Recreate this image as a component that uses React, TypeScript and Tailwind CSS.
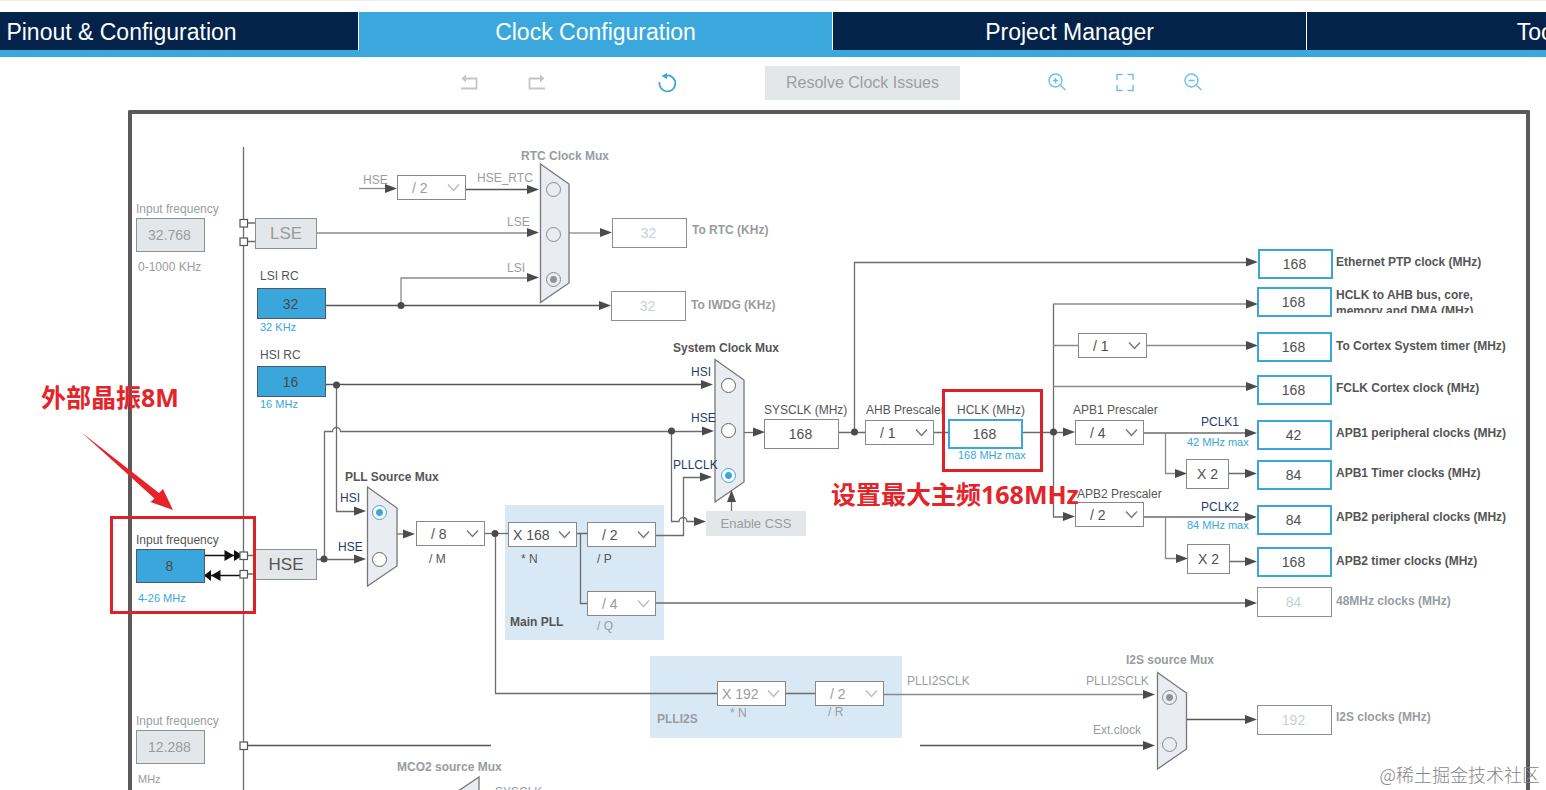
import React from 'react';
import clsx from 'clsx';

// The header takes this much height, diagram coordinates start below it
const CANVAS_TOP = 100;

const at = (x: number, y: number) => ({ left: x, top: y - CANVAS_TOP });

type Dir = 'right' | 'left' | 'up';

const wires: { d: string; tone?: 'light' | 'dark' }[] = [
  { d: 'M243.5 147V800' },
  { d: 'M247 223H255M247 241.5H255M247 555.5H255M247 574H255' },
  { d: 'M317 233H527', tone: 'light' },
  { d: 'M359 188.5H386', tone: 'light' },
  { d: 'M465 189.5H527', tone: 'dark' },
  { d: 'M325 305.5H600', tone: 'dark' },
  { d: 'M401 305V278H527', tone: 'light' },
  { d: 'M569 233H601', tone: 'light' },
  { d: 'M325 384.5H702', tone: 'dark' },
  { d: 'M336.5 385V511.5H355' },
  { d: 'M317 559.5H355' },
  { d: 'M324.5 559V431.5H332.5A4 4 0 0 1 340.5 431.5H702' },
  { d: 'M671.5 431V521.5H679A4 4 0 0 1 687 521.5H695' },
  { d: 'M397 534H405' },
  { d: 'M484 533.5H509' },
  { d: 'M495.5 533V693.5H717M785 693.5H815' },
  { d: 'M883 694.5H1144', tone: 'light' },
  { d: 'M577 533.5H588M580.5 533V603.5H588' },
  { d: 'M655 535.5H683.5V477.5H702' },
  { d: 'M655 603H1247' },
  { d: 'M744 432.5H754' },
  { d: 'M731.5 511V502' },
  { d: 'M839 432.5H865M933 432.5H949M1023 432.5H1064' },
  { d: 'M854.5 432V262.5H1247' },
  { d: 'M1053.5 304V517H1064' },
  { d: 'M1053 304H1247M1053 345.5H1078M1147 345.5H1247M1053 386.5H1247', tone: 'light' },
  { d: 'M1143 433H1247M1143 517H1247' },
  { d: 'M1165.5 433V473.5H1177M1165.5 517V558.5H1177', tone: 'light' },
  { d: 'M1228 473.5H1247M1229 561.5H1247' },
  { d: 'M1186 719.5H1246', tone: 'dark' },
  { d: 'M920 745.5H1144M247 745.5H491', tone: 'dark' },
];

const arrows: [number, number, Dir?][] = [
  [397, 188.5], [539, 189.5], [539, 232.5], [539, 277.5], [612, 232.5], [611, 305.5],
  [713, 384.5], [714, 431], [712, 477], [706, 521.5], [765, 432], [366, 511], [366, 559],
  [415, 534], [1258, 262], [1258, 304], [1258, 345.5], [1258, 386.5], [1257, 433],
  [1257, 473.5], [1257, 517], [1257, 561.5], [1257, 603], [1075, 432], [1075, 516.5],
  [1187, 473.5], [1188, 558.5], [1155, 694.5], [1155, 745.5], [1257, 719.5],
  [731.5, 490, 'up'],
];

const dots = [
  [401, 305.5], [336.5, 385], [324, 559], [671.5, 431], [495, 533.5], [854.5, 432], [1053.5, 432],
];

const pins = [223, 241.5, 555.5, 574, 745.5];

const muxes = [
  '540.5,164 569,184 569,283 540.5,302.5',
  '367.5,487 397,508 397,566 367.5,586',
  '715,359.5 744,380 744,482 715,502',
  '1157.5,672.5 1186.5,693 1186.5,749 1157.5,769',
  '479,777 479,800 445,800',
];

type Tone = 'text' | 'muted' | 'navy' | 'blue';

const tones: Record<Tone, string> = {
  text: 'text-[#555555]',
  muted: 'text-[#999c9f]',
  navy: 'text-[#1f3c6b]',
  blue: 'text-[#3aa6dc]',
};

// x is the left edge, y the middle of the line
const labels: { text: string; x: number; y: number; tone?: Tone; bold?: boolean; small?: boolean }[] = [
  { text: '0-1000 KHz', x: 138, y: 267, tone: 'muted' },
  { text: '32 KHz', x: 260, y: 327, tone: 'blue', small: true },
  { text: '16 MHz', x: 260, y: 404, tone: 'blue', small: true },
  { text: '4-26 MHz', x: 138, y: 598, tone: 'blue', small: true },
  { text: 'MHz', x: 138, y: 779, tone: 'muted', small: true },
  { text: 'RTC Clock Mux', x: 521, y: 156, tone: 'muted', bold: true },
  { text: 'HSE', x: 363, y: 180, tone: 'muted' },
  { text: 'HSE_RTC', x: 477, y: 178, tone: 'muted' },
  { text: 'LSE', x: 507, y: 222, tone: 'muted' },
  { text: 'LSI', x: 507, y: 268, tone: 'muted' },
  { text: 'System Clock Mux', x: 673, y: 348, bold: true },
  { text: 'HSI', x: 691, y: 372, tone: 'navy' },
  { text: 'HSE', x: 691, y: 418, tone: 'navy' },
  { text: 'PLLCLK', x: 673, y: 465, tone: 'navy' },
  { text: 'PLL Source Mux', x: 345, y: 477, bold: true },
  { text: 'HSI', x: 340, y: 498, tone: 'navy' },
  { text: 'HSE', x: 338, y: 547, tone: 'navy' },
  { text: '/ M', x: 429, y: 559 },
  { text: '* N', x: 521, y: 559 },
  { text: '/ P', x: 597, y: 559 },
  { text: '/ Q', x: 597, y: 626, tone: 'muted' },
  { text: 'Main PLL', x: 510, y: 622, bold: true },
  { text: 'PLLI2S', x: 657, y: 719, tone: 'muted', bold: true },
  { text: '* N', x: 730, y: 713, tone: 'muted' },
  { text: '/ R', x: 828, y: 712, tone: 'muted' },
  { text: 'PLLI2SCLK', x: 907, y: 681, tone: 'muted' },
  { text: 'PLLI2SCLK', x: 1086, y: 681, tone: 'muted' },
  { text: 'Ext.clock', x: 1093, y: 730, tone: 'muted' },
  { text: 'I2S source Mux', x: 1126, y: 660, tone: 'muted', bold: true },
  { text: 'MCO2 source Mux', x: 397, y: 767, tone: 'muted', bold: true },
  { text: 'SYSCLK', x: 495, y: 792, tone: 'muted' },
  { text: '168 MHz max', x: 958, y: 455, tone: 'blue', small: true },
  { text: 'PCLK1', x: 1201, y: 422, tone: 'navy' },
  { text: '42 MHz max', x: 1187, y: 442, tone: 'blue', small: true },
  { text: 'PCLK2', x: 1201, y: 507, tone: 'navy' },
  { text: '84 MHz max', x: 1187, y: 525, tone: 'blue', small: true },
];

type Kind = 'source' | 'disabled' | 'plain' | 'active' | 'off';

const kinds: Record<Kind, string> = {
  source: 'w-[69px] h-[31px] border border-[#4c5a63] bg-[#3aa6dc] text-[#4a4a4a]',
  disabled: 'w-[69px] h-[34px] border border-[#8c9196] bg-[#e3e7ea] text-[#999c9f]',
  plain: 'w-[75px] h-[30px] border border-[#888888] bg-white text-[#4f4f4f]',
  active: 'w-[75px] h-[30px] border-2 border-[#3aa6dc] bg-white text-[#4f4f4f]',
  off: 'w-[75px] h-[30px] border border-[#8f8f8f] bg-white text-[#c5cfdd]',
};

type Field = {
  id: string; value: string; x: number; y: number; kind: Kind;
  label: string; lx: number; ly: number; tone?: Tone; bold?: boolean;
};

const fields: Field[] = [
  { id: 'lse', value: '32.768', x: 136, y: 218, kind: 'disabled', label: 'Input frequency', lx: 136, ly: 209, tone: 'muted' },
  { id: 'lsi', value: '32', x: 257, y: 288, kind: 'source', label: 'LSI RC', lx: 260, ly: 276 },
  { id: 'hsi', value: '16', x: 257, y: 366, kind: 'source', label: 'HSI RC', lx: 260, ly: 355 },
  { id: 'hse', value: '8', x: 136, y: 549, kind: 'source', label: 'Input frequency', lx: 136, ly: 540 },
  { id: 'i2sin', value: '12.288', x: 136, y: 730, kind: 'disabled', label: 'Input frequency', lx: 136, ly: 721, tone: 'muted' },
  { id: 'rtc', value: '32', x: 612, y: 218, kind: 'off', label: 'To RTC (KHz)', lx: 692, ly: 230, tone: 'muted', bold: true },
  { id: 'iwdg', value: '32', x: 611, y: 291, kind: 'off', label: 'To IWDG (KHz)', lx: 691, ly: 305, tone: 'muted', bold: true },
  { id: 'sysclk', value: '168', x: 764, y: 419, kind: 'plain', label: 'SYSCLK (MHz)', lx: 764, ly: 410 },
  { id: 'hclk', value: '168', x: 948, y: 419, kind: 'active', label: 'HCLK (MHz)', lx: 957, ly: 410 },
  { id: 'eth', value: '168', x: 1258, y: 249, kind: 'active', label: 'Ethernet PTP clock (MHz)', lx: 1336, ly: 262, bold: true },
  { id: 'cortex', value: '168', x: 1257, y: 332, kind: 'active', label: 'To Cortex System timer (MHz)', lx: 1336, ly: 346, bold: true },
  { id: 'fclk', value: '168', x: 1257, y: 375, kind: 'active', label: 'FCLK Cortex clock (MHz)', lx: 1336, ly: 388, bold: true },
  { id: 'apb1p', value: '42', x: 1257, y: 420, kind: 'active', label: 'APB1 peripheral clocks (MHz)', lx: 1336, ly: 433, bold: true },
  { id: 'apb1t', value: '84', x: 1257, y: 460, kind: 'active', label: 'APB1 Timer clocks (MHz)', lx: 1336, ly: 473, bold: true },
  { id: 'apb2p', value: '84', x: 1257, y: 505, kind: 'active', label: 'APB2 peripheral clocks (MHz)', lx: 1336, ly: 517, bold: true },
  { id: 'apb2t', value: '168', x: 1257, y: 547, kind: 'active', label: 'APB2 timer clocks (MHz)', lx: 1336, ly: 561, bold: true },
  { id: 'clk48', value: '84', x: 1257, y: 587, kind: 'off', label: '48MHz clocks (MHz)', lx: 1336, ly: 601, tone: 'muted', bold: true },
  { id: 'i2s', value: '192', x: 1257, y: 705, kind: 'off', label: 'I2S clocks (MHz)', lx: 1336, ly: 717, tone: 'muted', bold: true },
];

const dividers: { name: string; value: string; x: number; y: number; muted?: boolean }[] = [
  { name: 'HSE divider', value: '/ 2', x: 397, y: 175, muted: true },
  { name: 'PLL M', value: '/ 8', x: 416, y: 521 },
  { name: 'PLL N', value: 'X 168', x: 508, y: 522 },
  { name: 'PLL P', value: '/ 2', x: 587, y: 522 },
  { name: 'PLL Q', value: '/ 4', x: 587, y: 591, muted: true },
  { name: 'PLLI2S N', value: 'X 192', x: 717, y: 681, muted: true },
  { name: 'PLLI2S R', value: '/ 2', x: 815, y: 681, muted: true },
  { name: 'Cortex prescaler', value: '/ 1', x: 1078, y: 333 },
];

const prescalers = [
  { label: 'AHB Prescaler', value: '/ 1', x: 865, y: 420, lx: 866, ly: 410 },
  { label: 'APB1 Prescaler', value: '/ 4', x: 1075, y: 420, lx: 1073, ly: 410 },
  { label: 'APB2 Prescaler', value: '/ 2', x: 1075, y: 502, lx: 1077, ly: 494 },
];

const radios: { group: string; name: string; x: number; y: number; checked?: boolean; muted?: boolean }[] = [
  { group: 'rtc', name: 'HSE_RTC', x: 553, y: 189, muted: true },
  { group: 'rtc', name: 'LSE', x: 553, y: 234, muted: true },
  { group: 'rtc', name: 'LSI', x: 553, y: 279, checked: true, muted: true },
  { group: 'sys', name: 'HSI', x: 728, y: 385 },
  { group: 'sys', name: 'HSE', x: 728, y: 430 },
  { group: 'sys', name: 'PLLCLK', x: 728, y: 475, checked: true },
  { group: 'pll', name: 'HSI', x: 379, y: 512, checked: true },
  { group: 'pll', name: 'HSE', x: 379, y: 559 },
  { group: 'i2s', name: 'PLLI2SCLK', x: 1169, y: 697, checked: true, muted: true },
  { group: 'i2s', name: 'Ext.clock', x: 1169, y: 744, muted: true },
];

function labelClass(tone: Tone = 'text', bold?: boolean, small?: boolean) {
  return clsx(
    'absolute leading-4 whitespace-nowrap',
    tones[tone],
    bold && 'font-bold',
    small ? 'text-[11px]' : 'text-xs',
  );
}

function Arrow({ x, y, dir = 'right' }: { x: number; y: number; dir?: Dir }) {
  const points =
    dir === 'up'
      ? `${x},${y} ${x - 4.5},${y + 12} ${x + 4.5},${y + 12}`
      : `${x},${y} ${x - 12},${y - 4.5} ${x - 12},${y + 4.5}`;
  return <polygon points={points} fill="#4b4b4b" />;
}

function Wiring() {
  return (
    <svg className="absolute left-0 top-0" width="1546" height="700" viewBox={`0 ${CANVAS_TOP} 1546 700`} fill="none" aria-hidden="true">
      <rect x="505" y="505" width="159" height="135" fill="#d9e8f5" />
      <rect x="650" y="656" width="252" height="82" fill="#d9e8f5" />
      {wires.map((wire) => (
        <path
          key={wire.d}
          d={wire.d}
          strokeWidth="1.3"
          stroke={wire.tone === 'light' ? '#8a8a8a' : wire.tone === 'dark' ? '#555555' : '#6c6c6c'}
        />
      ))}
      {muxes.map((points) => (
        <polygon key={points} points={points} fill="#e9edf1" stroke="#777777" strokeWidth="1.3" />
      ))}
      {arrows.map(([x, y, dir]) => <Arrow key={`${x}-${y}`} x={x} y={y} dir={dir} />)}
      {dots.map(([x, y]) => <circle key={`${x}-${y}`} cx={x} cy={y} r="3.5" fill="#4b4b4b" />)}

      {/* external oscillator in / out */}
      <path d="M204 555.5H240M204 575.5H240" stroke="#111111" strokeWidth="1.3" />
      <path d="M224.5 550L234 555.5L224.5 561ZM234 550L243 555.5L234 561ZM220.5 570L211 575.5L220.5 581ZM211 570L204 575.5L211 581Z" fill="#111111" />

      {pins.map((y) => (
        <rect key={y} x="240" y={y - 3.5} width="7.5" height="7.5" fill="white" stroke="#555555" strokeWidth="1.2" />
      ))}
    </svg>
  );
}

function Divider({ id, name, value, x, y, muted }: { id?: string; name?: string; value: string; x: number; y: number; muted?: boolean }) {
  return (
    <div className={clsx('absolute h-[25px] w-[69px]', muted ? 'text-[#999c9f]' : 'text-[#4f4f4f]')} style={at(x, y)}>
      <select
        id={id}
        aria-label={name}
        defaultValue={value}
        className={clsx(
          'h-full w-full appearance-none rounded-none border border-[#888888] bg-white text-sm leading-4 outline-none',
          value.startsWith('X') ? 'pl-1' : 'pl-3.5',
        )}
      >
        <option>{value}</option>
      </select>
      <svg className="pointer-events-none absolute right-1.5 top-2" width="13" height="10" viewBox="0 0 13 10" fill="none" stroke={muted ? '#b9bcbf' : '#777777'} strokeWidth="1.4">
        <path d="M1 1.5L6.5 7.5L12 1.5" />
      </svg>
    </div>
  );
}

function Tab({ text, active }: { text: string; active?: boolean }) {
  return (
    <button
      type="button"
      className={clsx(
        'flex-1 border-l border-white pt-0.5 text-center text-[23px] leading-none text-white',
        active ? 'bg-[#3aa8dc]' : 'bg-[#03234b]',
      )}
    >
      {text}
    </button>
  );
}

function Tool({ name, className, children }: { name: string; className?: string; children: React.ReactNode }) {
  return (
    <button type="button" aria-label={name} className={clsx('size-5', className)}>
      <svg width="20" height="20" viewBox="0 0 20 20" fill="none" stroke="currentColor" strokeWidth="1.4">
        {children}
      </svg>
    </button>
  );
}

function Header() {
  return (
    <header className="shrink-0 border-t border-[#eeeeee] pt-[11px]">
      {/* wider than the window, the outer tabs run off both sides */}
      <div className="-ml-[116px] w-[calc(100%+350px)]">
        <nav className="flex h-[45px] border-b-[7px] border-[#3aa8dc]">
          <Tab text="Pinout & Configuration" />
          <Tab text="Clock Configuration" active />
          <Tab text="Project Manager" />
          <Tab text="Tools" />
        </nav>
        <div className="flex h-[43px] items-center justify-center pt-2 pr-0.5">
          <Tool name="Undo" className="text-[#c6c6c6]">
            <path d="M2 15.5H17.5V5.5H5" strokeWidth="1.8" />
            <path d="M2.5 5.5L7 1.5V9.5Z" fill="currentColor" stroke="none" />
          </Tool>
          <Tool name="Redo" className="ml-12 text-[#c6c6c6]">
            <path d="M18 15.5H2.5V5.5H15" strokeWidth="1.8" />
            <path d="M17.5 5.5L13 1.5V9.5Z" fill="currentColor" stroke="none" />
          </Tool>
          <Tool name="Reset" className="ml-[110px] text-[#3aa6dc]">
            <path d="M2.5 9A8 8 0 1 0 9.5 2.5" strokeWidth="1.8" />
            <path d="M4.5 3L10 0V6Z" fill="currentColor" stroke="none" />
          </Tool>
          <button type="button" className="mr-[87px] ml-[88px] h-[34px] w-[195px] bg-[#e3e7ea] text-base text-[#9b9fa3]">
            Resolve Clock Issues
          </button>
          <Tool name="Zoom in" className="text-[#6cc0e6]">
            <circle cx="8.5" cy="7.5" r="6.5" />
            <path d="M13.2 12.2L18.5 17M8.5 4.8V10.2M5.8 7.5H11.2" />
          </Tool>
          <Tool name="Fit" className="ml-12 text-[#6cc0e6]">
            <path d="M2 7V1.5H7.5M12.5 1.5H18V7M18 12V17.5H12.5M7.5 17.5H2V12" />
          </Tool>
          <Tool name="Zoom out" className="ml-12 text-[#6cc0e6]">
            <circle cx="8.5" cy="7.5" r="6.5" />
            <path d="M13.2 12.2L18.5 17M5.5 7.5H11.5" />
          </Tool>
        </div>
      </div>
    </header>
  );
}

function Annotations() {
  const note = "absolute whitespace-nowrap text-[25px] leading-7 font-bold text-[#e3242b] font-['Open_Sans','Noto_Sans_CJK_SC',sans-serif]";
  return (
    <>
      <div className="pointer-events-none absolute h-[98px] w-[146px] border-3 border-[#dc2127]" style={at(110, 516)} />
      <div className="pointer-events-none absolute h-[83px] w-[101px] border-3 border-[#dc2127]" style={at(942, 389)} />
      <svg className="pointer-events-none absolute" style={at(78, 428)} width="98" height="84" viewBox="78 428 98 84" aria-hidden="true">
        <path d="M81 432L159 493L163 489L173 510L150.5 502L154.500 498.5Z" fill="#e8222a" />
      </svg>
      <p className={note} style={at(41, 383)}>外部晶振8M</p>
      <p className={note} style={at(831, 480)}>设置最大主频168MHz</p>
      <p className="absolute right-1.5 bottom-1 font-['Noto_Sans_CJK_SC',sans-serif] text-lg leading-6 font-light whitespace-nowrap text-[#858585]">
        @稀土掘金技术社区
      </p>
    </>
  );
}

export default function App() {
  return (
    <div className="flex h-screen flex-col overflow-hidden bg-white font-['Liberation_Sans',Arial,sans-serif]">
      <Header />
      <main className="relative flex-1 overflow-hidden pt-2.5 pr-4 pl-32">
        <div className="h-full rounded-t-xs border-x-4 border-t-4 border-[#5a5a5a]" />
        <Wiring />

        {labels.map((l) => (
          <span key={`${l.text}-${l.x}-${l.y}`} className={labelClass(l.tone, l.bold, l.small)} style={at(l.x, l.y - 8)}>
            {l.text}
          </span>
        ))}

        {fields.map((f) => (
          <React.Fragment key={f.id}>
            <label htmlFor={f.id} className={labelClass(f.tone, f.bold)} style={at(f.lx, f.ly - 8)}>
              {f.label}
            </label>
            <input
              id={f.id}
              type="text"
              defaultValue={f.value}
              className={clsx('absolute pr-0.5 text-center text-sm outline-none', kinds[f.kind], f.id === 'hse' && 'h-[34px]')}
              style={at(f.x, f.y)}
            />
          </React.Fragment>
        ))}

        {/* this label wraps and its second line is cut by the row */}
        <label
          htmlFor="ahb"
          className="absolute h-[26px] w-[150px] overflow-hidden text-xs leading-4 font-bold text-[#555555]"
          style={at(1336, 287)}
        >
          HCLK to AHB bus, core, memory and DMA (MHz)
        </label>
        <input
          id="ahb"
          type="text"
          defaultValue="168"
          className={clsx('absolute pr-0.5 text-center text-sm outline-none', kinds.active)}
          style={at(1257, 287)}
        />

        {dividers.map((d) => <Divider key={d.name} {...d} />)}
        {prescalers.map((p) => (
          <React.Fragment key={p.label}>
            <label htmlFor={p.label} className={labelClass()} style={at(p.lx, p.ly - 8)}>{p.label}</label>
            <Divider id={p.label} value={p.value} x={p.x} y={p.y} />
          </React.Fragment>
        ))}

        {radios.map((r) => (
          <input
            key={`${r.group}-${r.name}`}
            type="radio"
            name={r.group}
            aria-label={r.name}
            defaultChecked={r.checked}
            className={clsx(
              'absolute size-[15px] appearance-none rounded-full border',
              r.muted
                ? 'border-[#8a8a8a] checked:bg-[radial-gradient(circle,#8f9498_3px,transparent_4px)]'
                : 'border-[#666666] bg-white checked:border-[#3aa6dc] checked:bg-[radial-gradient(circle,#3aa6dc_3px,white_4px)]',
            )}
            style={at(r.x - 7, r.y - 7)}
          />
        ))}

        <button type="button" className="absolute h-[31px] w-[62px] border border-[#8c9196] bg-[#e3e7ea] text-[17px] text-[#999c9f]" style={at(255, 218)}>
          LSE
        </button>
        <button type="button" className="absolute h-[31px] w-[62px] border border-[#8c9196] bg-[#e3e7ea] text-[17px] text-[#555555]" style={at(255, 549)}>
          HSE
        </button>
        <button type="button" className="absolute h-[25px] w-[100px] bg-[#e3e7ea] text-[13px] text-[#999c9f]" style={at(706, 511)}>
          Enable CSS
        </button>
        <div className="absolute flex h-[30px] w-[43px] items-center justify-center border border-[#888888] bg-white text-sm text-[#4f4f4f]" style={at(1186, 459)}>
          X 2
        </div>
        <div className="absolute flex h-[30px] w-[43px] items-center justify-center border border-[#888888] bg-white text-sm text-[#4f4f4f]" style={at(1187, 544)}>
          X 2
        </div>

        <Annotations />
      </main>
    </div>
  );
}
